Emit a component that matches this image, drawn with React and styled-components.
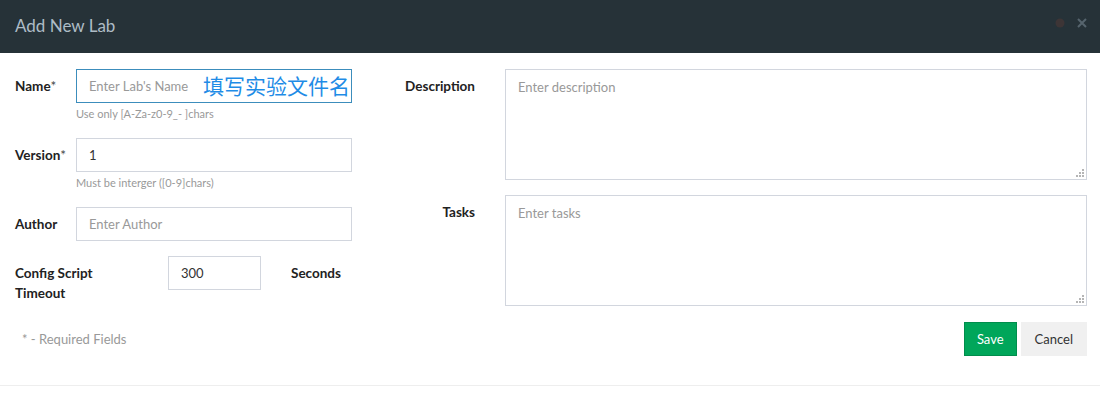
import React from "react";
import styled, { createGlobalStyle } from "styled-components";

const Global = createGlobalStyle`
  body {
    margin: 0;
    background: #fff;
    font-family: "Lato", "Noto Sans CJK SC", sans-serif;
    font-size: 14px;
    color: #333;
  }
`;

const Modal = styled.div`
  width: 1100px;
  background: #fff;
`;

const Header = styled.div`
  height: 53px;
  background: #263238;
  display: flex;
  align-items: center;
  justify-content: space-between;
  padding: 0 13px 0 15px;
  box-sizing: border-box;
`;

const Title = styled.h4`
  margin: 0;
  font-size: 17px;
  font-weight: 400;
  color: #aebcc6;
  padding-bottom: 3px;
`;

const HeaderTools = styled.div`
  display: flex;
  align-items: center;
  gap: 12px;
  padding-bottom: 8px;
`;

const Body = styled.div`
  display: grid;
  grid-template-columns: 337px 1fr;
  column-gap: 28px;
  padding: 16px 13px 0 15px;
`;

const Column = styled.div`
  display: flex;
  flex-direction: column;
`;

const Group = styled.div`
  display: flex;
  align-items: flex-start;
  margin-bottom: ${p => (p.$mb ?? 15)}px;
`;

const Label = styled.label`
  flex: 0 0 ${p => p.$w}px;
  font-weight: 700;
  font-size: 13.5px;
  line-height: 20px;
  padding-top: 7px;
  text-align: ${p => p.$right ? "right" : "left"};
  padding-right: ${p => p.$right ? 30 : 0}px;
  box-sizing: border-box;
  color: #222;
`;

const Star = styled.span`
  font-weight: 400;
  color: #444;
`;

const Field = styled.div`
  position: relative;
  flex: 1;
  display: flex;
  flex-direction: column;
`;

const Input = styled.input`
  box-sizing: border-box;
  width: ${p => p.$w ? p.$w + "px" : "100%"};
  height: 34px;
  border: 1px solid ${p => p.$focus ? "#3c8dbc" : "#d2d6de"};
  padding: 0 12px;
  font-family: inherit;
  font-size: 13px;
  color: #333;
  outline: none;
  &::placeholder { color: #999; }
`;

const TextArea = styled.textarea`
  box-sizing: border-box;
  width: 100%;
  height: ${p => p.$h}px;
  border: 1px solid #d2d6de;
  padding: 7px 12px;
  font-family: inherit;
  font-size: 13px;
  line-height: 20px;
  outline: none;
  resize: none;
  display: block;
  &::placeholder { color: #999; }
`;

const Grip = styled.svg`
  position: absolute;
  right: 3px;
  bottom: 3px;
`;

const Help = styled.span`
  font-size: 11px;
  line-height: 14px;
  color: #999;
  margin-top: 4px;
`;

const Note = styled.span`
  position: absolute;
  right: 2px;
  top: 1px;
  font-size: 21px;
  line-height: 30px;
  color: #1f8ce6;
  font-family: "Noto Sans CJK SC", sans-serif;
`;

const Unit = styled.span`
  font-weight: 700;
  font-size: 13.5px;
  line-height: 20px;
  padding: 7px 0 0 30px;
  color: #222;
`;

const Actions = styled.div`
  display: flex;
  align-items: center;
  justify-content: space-between;
  padding: 16px 13px 29px 22px;
  border-bottom: 1px solid #eee;
`;

const Required = styled.span`
  font-size: 13px;
  color: #999;
`;

const Buttons = styled.div`
  display: flex;
  gap: 4px;
`;

const Button = styled.button`
  height: 34px;
  padding: 0 ${p => p.$primary ? 12 : 13}px;
  font-family: inherit;
  font-size: 13px;
  border: 1px solid ${p => p.$primary ? "#008d4c" : "#f0f0f0"};
  background: ${p => p.$primary ? "#00a65a" : "#f0f0f0"};
  color: ${p => p.$primary ? "#fff" : "#333"};
  cursor: pointer;
`;

const ResizeGrip = () => (
  <Grip width="8" height="8" viewBox="0 0 8 8">
    <g fill="#b5b5b5">
      <rect x="6" y="0" width="2" height="2" />
      <rect x="3" y="3" width="2" height="2" />
      <rect x="6" y="3" width="2" height="2" />
      <rect x="0" y="6" width="2" height="2" />
      <rect x="3" y="6" width="2" height="2" />
      <rect x="6" y="6" width="2" height="2" />
    </g>
  </Grip>
);

export default function App() {
  return (
    <Modal>
      <Global />
      <Header>
        <Title>Add New Lab</Title>
        <HeaderTools>
          <svg width="10" height="10" viewBox="0 0 10 10">
            <circle cx="5" cy="5" r="4.5" fill="#3d3536" />
          </svg>
          <svg width="10" height="10" viewBox="0 0 10 10">
            <path d="M1 1 L9 9 M9 1 L1 9" stroke="#56646d" strokeWidth="2" />
          </svg>
        </HeaderTools>
      </Header>
      <Body>
        <Column>
          <Group $mb={17}>
            <Label $w={61}>Name<Star>*</Star></Label>
            <Field>
              <Input $focus placeholder="Enter Lab's Name" />
              <Note>填写实验文件名</Note>
              <Help>Use only [A-Za-z0-9_- ]chars</Help>
            </Field>
          </Group>
          <Group $mb={17}>
            <Label $w={61}>Version<Star>*</Star></Label>
            <Field>
              <Input defaultValue="1" />
              <Help>Must be interger ([0-9]chars)</Help>
            </Field>
          </Group>
          <Group>
            <Label $w={61}>Author</Label>
            <Field>
              <Input placeholder="Enter Author" />
            </Field>
          </Group>
          <Group $mb={0}>
            <Label $w={153}>Config Script<br />Timeout</Label>
            <Input $w={93} defaultValue="300" />
            <Unit>Seconds</Unit>
          </Group>
        </Column>
        <Column>
          <Group>
            <Label $w={125} $right>Description</Label>
            <Field>
              <TextArea $h={111} placeholder="Enter description" />
              <ResizeGrip />
            </Field>
          </Group>
          <Group $mb={0}>
            <Label $w={125} $right>Tasks</Label>
            <Field>
              <TextArea $h={111} placeholder="Enter tasks" />
              <ResizeGrip />
            </Field>
          </Group>
        </Column>
      </Body>
      <Actions>
        <Required>* - Required Fields</Required>
        <Buttons>
          <Button $primary>Save</Button>
          <Button>Cancel</Button>
        </Buttons>
      </Actions>
    </Modal>
  );
}
